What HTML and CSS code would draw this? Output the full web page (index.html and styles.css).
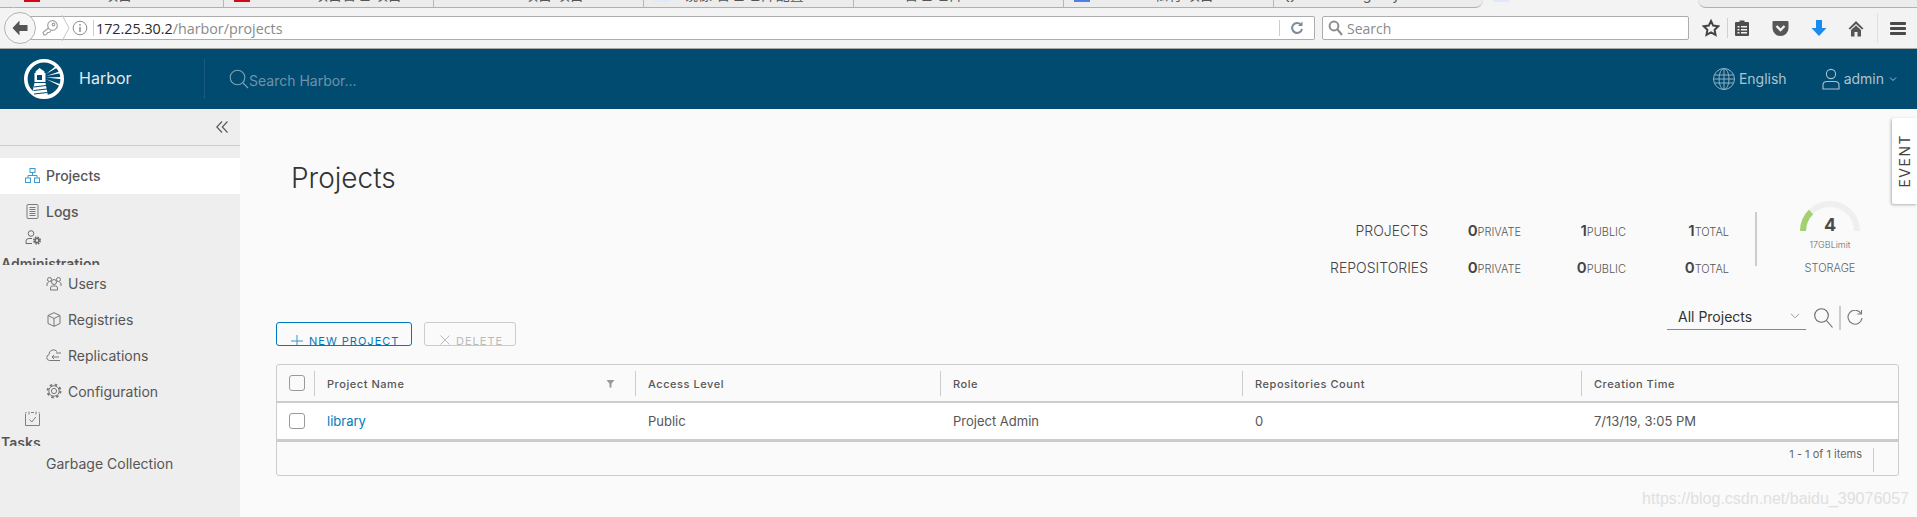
FILE: index.html
```html
<!DOCTYPE html>
<html lang="en">
<head>
<meta charset="utf-8">
<title>Harbor</title>
<link rel="stylesheet" href="styles.css">
</head>
<body>
<div class="tabstrip">
  <div class="tab tab-first"></div>
  <div class="tab"><i class="fav red"></i><span>Harbor 项目</span></div>
  <div class="tab"><i class="fav red"></i><span>Harbor 项目管理 项目</span></div>
  <div class="tab"><i class="fav dim"></i><span>Harbor 项目 项目</span></div>
  <div class="tab"><i class="fav pale"></i><span>镜像 管理 仓库配置</span></div>
  <div class="tab"><span class="pad">管理 仓库</span></div>
  <div class="tab"><i class="fav blue"></i><span>Harbor 私有 项目</span></div>
  <div class="tab tab-last"><span>{} docker registry</span></div>
  <div class="tab tab-active"><i class="fav pale"></i></div>
  <div class="tab tab-rest"></div>
</div>

<div class="toolbar">
  <div class="back">
    <svg width="20" height="20" viewBox="0 0 20 20"><path d="M9.500 2.500 2.500 10l7 7.500V13h8V7h-8z" fill="#555"/></svg>
  </div>
  <div class="urlbar">
    <svg class="key" width="18" height="18" viewBox="0 0 18 18" fill="none" stroke="#a4a4a4" stroke-width="1.200"><circle cx="11.500" cy="6.500" r="4.800"/><circle cx="12.500" cy="5.500" r="1.300"/><path d="M7.500 9 2 13.500 3 16l2.500-.5 1-2h2l1.500-2"/></svg>
    <svg class="crumb" width="9" height="26" viewBox="0 0 9 26" fill="none" stroke="#c4c4c4"><path d="M1 0l7 13-7 13"/></svg>
    <svg class="info" width="16" height="16" viewBox="0 0 16 16" fill="none" stroke="#8a8a8a"><circle cx="8" cy="8" r="6.800"/><path d="M8 7v5M8 4v1.600" stroke-width="1.500"/></svg>
    <i class="url-sep"></i>
    <span class="url"><span class="url-host">172.25.30.2</span>/harbor/projects</span>
    <i class="url-sep url-sep-end"></i>
    <svg class="reload" width="14" height="14" viewBox="0 0 14 14" fill="none" stroke="#7d8b99" stroke-width="2"><path d="M11 3.800A5 5 0 1 0 12 8"/><path d="M12.500 .5v4.500H8z" fill="#7d8b99" stroke="none"/></svg>
  </div>
  <div class="searchbar">
    <svg width="15" height="16" viewBox="0 0 15 16" fill="none" stroke="#8d8d8d" stroke-width="2"><circle cx="6" cy="6" r="4.400"/><path d="M9.500 9.500 14 15"/></svg>
    <span>Search</span>
  </div>
  <div class="tb-icons">
    <svg class="tb-star" width="18" height="18" viewBox="0 0 18 18" fill="none" stroke="#444" stroke-width="2"><path d="M9 2l2.200 4.600 5 .7-3.600 3.500.9 5L9 13.400 4.500 15.800l.9-5L1.800 7.300l5-.7z"/></svg>
    <i class="tb-sep"></i>
    <svg class="tb-slot-clip" width="16" height="18" viewBox="0 0 16 18"><path d="M2 3h3.500V1.500h5V3H14q1 0 1 1v12q0 1-1 1H2q-1 0-1-1V4q0-1 1-1z" fill="#4d4d4d"/><path d="M3.500 7h2v1.500h-2zM7 7h6v1.500H7zM3.500 10h2v1.500h-2zM7 10h6v1.500H7zM3.500 13h2v1.500h-2zM7 13h6v1.500H7z" fill="#f3f3f3"/></svg>
    <svg class="tb-slot-pocket" width="17" height="17" viewBox="0 0 17 17"><path d="M1.500 1h14q1 0 1 1v6a8 8 0 0 1-16 0V2q0-1 1-1z" fill="#565656"/><path d="M4.500 6 8.500 10 12.500 6" fill="none" stroke="#f3f3f3" stroke-width="2.400"/></svg>
    <svg class="tb-slot" width="16" height="18" viewBox="0 0 16 18"><path d="M5 1h6v8h4.500L8 17 .5 9H5z" fill="#1a8cf0"/></svg>
    <svg class="tb-slot tb-home" width="16" height="17" viewBox="0 0 16 17"><path d="M8 1 .5 8.500 2 9.500 8 4l6 5.500 1.500-1z" fill="#555"/><path d="M3 10 8 5.500l5 4.500v6.500H9.500V12h-3v4.500H3z" fill="#555"/></svg>
    <i class="tb-sep tb-sep-tall"></i>
    <svg class="tb-burger" width="16" height="13" viewBox="0 0 16 13" fill="#4a4a4a"><rect width="16" height="3" rx="1"/><rect y="5" width="16" height="3" rx="1"/><rect y="10" width="16" height="3" rx="1"/></svg>
  </div>
</div>

<header class="navbar">
  <svg class="logo" width="40" height="40" viewBox="0 0 40 40">
    <circle cx="20" cy="20" r="18.200" fill="none" stroke="#fff" stroke-width="3.600"/>
    <path d="M15.500 9 20.500 12.500V14H21.500V23H10.500V14H11.500V12.500z" fill="#fff"/>
    <path d="M13 16h5v5h-5z" fill="#014a70"/>
    <path d="M10.500 24H21.500L24 37l-5 1.500-6-1-5-2.500z" fill="#fff"/>
    <path d="M10 28l12-1.500M9.500 31.500l13.500-1.500M10 35l13.500-1.500" stroke="#014a70" stroke-width="1"/>
    <path d="M22 15 32 7l1.500 1.500zM22 17 37 12l.5 2zM22 18.500 38 18v2.200zM22 20 37 25.500l-.7 1.800z" fill="#fff"/>
  </svg>
  <span class="brand">Harbor</span>
  <i class="nav-sep"></i>
  <svg class="nav-search-icon" width="20" height="20" viewBox="0 0 20 20" fill="none" stroke="#7fa2b5" stroke-width="1.100"><circle cx="8.500" cy="8.500" r="7.300"/><path d="M14 14l5 5"/></svg>
  <span class="nav-search">Search Harbor...</span>
  <div class="nav-right">
    <svg class="globe" width="24" height="24" viewBox="0 0 24 24" fill="none" stroke="#8fb0c2"><circle cx="12" cy="12" r="10.500"/><ellipse cx="12" cy="12" rx="5" ry="10.500"/><path d="M12 1.500v21M2.500 8h19M2.500 16h19M1.500 12h21"/></svg>
    <span class="lang">English</span>
    <svg class="user" width="18" height="22" viewBox="0 0 18 22" fill="none" stroke="#a9c2d0" stroke-width="1.100"><circle cx="9" cy="6" r="4.600"/><path d="M1 21v-4q0-3.500 4-3.500h8q4 0 4 3.500v4z"/></svg>
    <span class="lang">admin</span>
    <svg class="caret" width="8" height="6" viewBox="0 0 8 6" fill="none" stroke="#a9c2d0"><path d="M1 1.500 4 4.500 7 1.500"/></svg>
  </div>
</header>

<div class="main">
  <nav class="sidebar">
    <div class="collapse">
      <svg width="12" height="12" viewBox="0 0 12 12" fill="none" stroke="#555" stroke-width="1.100"><path d="M6 .5.800 6 6 11.500M11.500.5 6.300 6l5.200 5.500"/></svg>
    </div>
    <a class="nav-item nav-active">
      <svg width="15" height="15" viewBox="0 0 15 15" fill="none" stroke="#3b9bd2"><rect x="5" y=".5" width="5" height="4"/><rect x=".5" y="10" width="5" height="4.500"/><rect x="9.500" y="10" width="5" height="4.500"/><path d="M7.500 4.500v3M3 10V7.500h9V10"/></svg>
      <span>Projects</span>
    </a>
    <a class="nav-item">
      <svg width="15" height="15" viewBox="0 0 15 15" fill="none" stroke="#7a7a7a"><rect x="2" y=".5" width="11" height="14" rx="1"/><path d="M4.500 3.500h6M4.500 5.500h6M4.500 7.500h6M4.500 9.500h6M4.500 11.500h6"/></svg>
      <span>Logs</span>
    </a>
    <div class="nav-group">
      <svg width="16" height="15" viewBox="0 0 16 15" fill="none" stroke="#6b6b6b"><circle cx="6" cy="3.500" r="2.800"/><path d="M1 13.500V11q0-2.500 3-2.500h3"/><path d="M1 13.500h6"/><circle cx="12" cy="10.500" r="2" stroke-width="1.600"/><circle cx="12" cy="10.500" r="3.200" stroke-width="1.600" stroke-dasharray="1.600 .9"/></svg>
      <span>Administration</span>
    </div>
    <a class="nav-item nav-sub">
      <svg width="16" height="15" viewBox="0 0 16 15" fill="none" stroke="#777"><circle cx="8" cy="6" r="2.500"/><path d="M4.500 14v-2q0-2 2-2h3q2 0 2 2v2z"/><circle cx="3.500" cy="3.500" r="2"/><circle cx="12.500" cy="3.500" r="2"/><path d="M1 10V8q0-1.500 1.500-1.500M15 10V8q0-1.500-1.500-1.500"/></svg>
      <span>Users</span>
    </a>
    <a class="nav-item nav-sub">
      <svg width="16" height="15" viewBox="0 0 16 15" fill="none" stroke="#777"><path d="M8 .7 14 3.500v8L8 14.300 2 11.500v-8z"/><path d="M2 3.500 8 6.500l6-3M8 6.500v7.800"/></svg>
      <span>Registries</span>
    </a>
    <a class="nav-item nav-sub">
      <svg width="16" height="15" viewBox="0 0 16 15" fill="none" stroke="#777"><path d="M11 12.500H3.500a3 3 0 0 1-.5-5.900A4.500 4.500 0 0 1 11 3.500"/><path d="M6 9h7M8 7 6 9l2 2M10 5h5M10 12.500h4"/></svg>
      <span>Replications</span>
    </a>
    <a class="nav-item nav-sub">
      <svg width="16" height="16" viewBox="0 0 16 16" fill="none" stroke="#777"><circle cx="8" cy="8" r="2.600"/><circle cx="8" cy="8" r="5.200"/><circle cx="8" cy="8" r="6.500" stroke-width="1.800" stroke-dasharray="2.500 2.600"/></svg>
      <span>Configuration</span>
    </a>
    <div class="nav-group nav-group-tasks">
      <svg width="15" height="15" viewBox="0 0 15 15" fill="none" stroke="#808080"><path d="M.5 2.500v12h14v-12M4 .5v3M11 .5v3M6 1.500h3M.5 1.500h1M13.500 1.500h1"/><path d="M4.500 8.500l2.300 2.500 4-5"/></svg>
      <span>Tasks</span>
    </div>
    <a class="nav-item nav-plain"><span>Garbage Collection</span></a>
  </nav>

  <main class="content">
    <h1 class="title">Projects</h1>

    <section class="summary">
      <div class="stats">
        <span class="stat-label">PROJECTS</span>
        <span class="stat"><b>0</b>PRIVATE</span>
        <span class="stat"><b>1</b>PUBLIC</span>
        <span class="stat"><b>1</b>TOTAL</span>
        <span class="stat-label">REPOSITORIES</span>
        <span class="stat"><b>0</b>PRIVATE</span>
        <span class="stat"><b>0</b>PUBLIC</span>
        <span class="stat"><b>0</b>TOTAL</span>
      </div>
      <i class="summary-sep"></i>
      <div class="gauge">
        <svg width="60" height="30" viewBox="0 0 60 30" fill="none" stroke-width="6"><path d="M3 30a27 27 0 0 1 54 0" stroke="#efefef"/><path d="M3 30a27 27 0 0 1 8-19" stroke="#a2d16f"/></svg>
        <span class="gauge-num">4</span>
        <span class="gauge-limit">17GBLimit</span>
        <span class="gauge-title">STORAGE</span>
      </div>
    </section>

    <section class="actions">
      <div class="buttons">
        <button class="btn btn-primary"><svg width="12" height="12" viewBox="0 0 12 12" stroke="#3a96cc" fill="none"><path d="M6 0v12M0 6h12"/></svg>NEW PROJECT</button>
        <button class="btn btn-disabled"><svg width="10" height="10" viewBox="0 0 10 10" stroke="#bbb" fill="none"><path d="M.5.500l9 9M9.500.500l-9 9"/></svg>DELETE</button>
      </div>
      <div class="filters">
        <div class="select"><span>All Projects</span><svg width="10" height="6" viewBox="0 0 10 6" fill="none" stroke="#999"><path d="M1 .8 5 4.800 9 .8"/></svg></div>
        <svg class="f-search" width="19" height="20" viewBox="0 0 19 20" fill="none" stroke="#666" stroke-width="1.100"><circle cx="7.500" cy="7.500" r="6.800"/><path d="M12.500 12.500l6 7"/></svg>
        <i class="f-sep"></i>
        <svg class="f-refresh" width="16" height="16" viewBox="0 0 16 16" fill="none" stroke="#777" stroke-width="1.100"><path d="M14 3.500A7 7 0 1 0 15 8"/><path d="M14.500 0v4h-4"/></svg>
      </div>
    </section>

    <section class="table">
      <div class="tr tr-head">
        <div class="check-cell"><i class="check"></i></div>
        <div class="cell th th-filter">Project Name<svg width="9" height="9" viewBox="0 0 9 9" fill="#999"><path d="M.5 1h8L5.500 4.800V8.500h-2V4.800z"/></svg></div>
        <div class="cell th">Access Level</div>
        <div class="cell th">Role</div>
        <div class="cell th">Repositories Count</div>
        <div class="cell th">Creation Time</div>
      </div>
      <div class="tr tr-body">
        <div class="check-cell"><i class="check"></i></div>
        <div class="cell"><a class="link">library</a></div>
        <div class="cell">Public</div>
        <div class="cell">Project Admin</div>
        <div class="cell">0</div>
        <div class="cell">7/13/19, 3:05 PM</div>
      </div>
      <div class="tfoot"><span>1 - 1 of 1 items</span><i class="tfoot-sep"></i></div>
    </section>

    <aside class="event"><span>EVENT</span></aside>
    <div class="watermark">https://blog.csdn.net/baidu_39076057</div>
  </main>
</div>
</body>
</html>
```

FILE: styles.css
```css
* { box-sizing: border-box; }
html, body { margin: 0; padding: 0; height: 100%; overflow: hidden; }
body {
  display: flex; flex-direction: column;
  font-family: Inter, "Noto Sans CJK SC", sans-serif;
  color: #565656; background: #fafafa;
}
i { display: block; font-style: normal; }
a { text-decoration: none; }
svg { display: block; flex: none; }

/* tab strip */
.tabstrip { display: flex; height: 8px; background: #f3f3f3; flex: none; }
.tab {
  width: 210px; height: 8px; flex: none; background: #ececec; overflow: hidden;
  border-bottom: 1px solid #b0b0b0; border-right: 1px solid #b8b8b8;
  display: flex; align-items: flex-start; padding-left: 10px; gap: 14px;
}
.tab span { font-size: 14px; line-height: 16px; height: 16px; margin-top: -13px; color: #555; white-space: nowrap; }
.tab-first { width: 14px; padding: 0; border-right: 1px solid #ececec; }
.tab .pad { padding-left: 40px; }
.fav { width: 16px; height: 2px; flex: none; }
.red { background: #cf0a16; }
.dim { background: #ececec; }
.pale { background: #dfe9fb; }
.blue { background: #4f7fe8; }
.tab-last { width: 209px; border-right: 0; border-bottom-right-radius: 8px; }
.tab-active { width: 215px; background: #f3f3f3; border: 0; }
.tab-rest { flex: 1; border-right: 0; border-bottom-left-radius: 8px; }

/* browser toolbar */
.toolbar {
  height: 41px; flex: none; display: flex; align-items: center;
  background: #f3f3f3; border-bottom: 1px solid #a9a9a9; padding-left: 4px;
  font-family: "Open Sans", sans-serif;
}
.back {
  width: 32px; height: 32px; border-radius: 50%; background: #f6f6f6; border: 1px solid #b4b4b4;
  display: flex; align-items: center; justify-content: center; position: relative; z-index: 1; flex: none;
}
.urlbar {
  width: 1289px; height: 24px; margin-left: -10px; background: #fff; flex: none;
  border: 1px solid #adadad; border-left: 0; border-radius: 0 2px 2px 0;
  display: flex; align-items: center;
}
.key { margin-left: 15px; }
.crumb { margin-left: 2px; }
.info { margin-left: 2px; }
.url-sep { width: 1px; height: 16px; background: #ccc; margin-left: 5px; }
.url { font-size: 14.300px; color: #8a8a8a; margin-left: 2px; flex: 1; }
.url-host { color: #2b2b2b; }
.url-sep-end { margin: 0; }
.reload { margin: 0 10px 0 10px; }
.searchbar {
  width: 367px; height: 24px; margin-left: 7px; background: #fff; flex: none;
  border: 1px solid #adadad; border-radius: 2px; display: flex; align-items: center; gap: 4px; padding-left: 5px;
  font-size: 14px; color: #8a8a8a;
}
.tb-icons { display: flex; align-items: center; flex: 1; }
.tb-star { margin-left: 13px; }
.tb-sep { width: 1px; height: 20px; background: #d0d0d0; margin-left: 7px; }
.tb-slot-clip { margin-left: 6px; }
.tb-slot-pocket { margin-left: 22px; }
.tb-slot { margin-left: 22px; }
.tb-home { margin-left: 21px; }
.tb-sep-tall { height: 30px; margin-left: 13px; background: #e0e0e0; }
.tb-burger { margin-left: 12px; }

/* navbar */
.navbar {
  height: 60px; flex: none; background: #014a70; display: flex; align-items: center;
  padding-left: 24px; font-size: 14px;
}
.brand { font-size: 16px; color: #e4ebf0; margin-left: 15px; width: 125px; padding-bottom: 2px; }
.nav-sep { width: 1px; height: 40px; background: #195b7e; }
.nav-search-icon { margin-left: 24px; }
.nav-search { color: #6d93a8; margin-left: 0; font-size: 14px; padding-top: 2px; }
.nav-right { margin-left: auto; display: flex; align-items: center; padding-right: 20px; }
.lang { color: #adc4d1; font-size: 14px; padding-bottom: 1px; }
.globe { margin-right: 3px; }
.user { margin-left: 35px; margin-right: 4px; }
.caret { margin-left: 5px; }

/* main split */
.main { flex: 1; display: flex; min-height: 0; }
.sidebar { width: 240px; flex: none; background: #eee; font-size: 14px; }
.collapse { height: 37px; border-bottom: 1px solid #ccc; margin-bottom: 12px; display: flex; justify-content: flex-end; align-items: center; padding-right: 12px; padding-bottom: 1px; }
.nav-item { height: 36px; display: flex; align-items: center; color: #565656; font-weight: 500; padding-left: 25px; padding-bottom: 2px; gap: 6px; }
.nav-active { background: #fff; }
.nav-group { height: 35px; margin-bottom: 1px; overflow: hidden; font-weight: 600; }
.nav-group svg { margin: 0 0 0 25px; }
.nav-group span { display: block; margin-top: 10px; padding-left: 1px; line-height: 18px; }
.nav-group-tasks { height: 36px; margin-bottom: 0; }
.nav-group-tasks svg { margin-top: 1px; }
.nav-group-tasks span { margin-top: 8px; }
.nav-item.nav-sub { padding-left: 46px; gap: 6px; font-weight: 400; }
.nav-item.nav-plain { padding-left: 46px; font-weight: 400; }

/* content */
.content { flex: 1; min-width: 0; padding: 51px 18px 0 36px; position: relative; }
.title { margin: 0 0 0 15px; font-size: 28px; line-height: 36px; font-weight: 300; color: #333; }
.summary { display: flex; justify-content: flex-end; align-items: flex-start; padding-right: 34px; height: 110px; }
.stats {
  display: grid; grid-template-columns: auto 93px 105px 103px; grid-auto-rows: 37px;
  margin-top: 16px; align-items: center;
}
.stat-label { font-size: 14px; font-weight: 300; text-align: right; color: #444; }
.stat { font-size: 11px; font-weight: 300; text-align: right; color: #555; }
.stat b { font-size: 15px; color: #444; font-weight: 600; }
.summary-sep { width: 2px; height: 54px; background: #ccc; margin: 16px 38px 0 26px; }
.gauge { width: 70px; margin-top: 5px; display: flex; flex-direction: column; align-items: center; position: relative; }
.gauge-num { position: absolute; top: 14px; left: 0; right: 0; text-align: center; font-size: 18px; line-height: 20px; font-weight: 700; color: #4a4a4a; }
.gauge-limit { font-size: 9px; line-height: 12px; margin-top: 8px; color: #666; white-space: nowrap; font-weight: 300; }
.gauge-title { font-size: 11px; line-height: 14px; margin-top: 10px; color: #666; font-weight: 300; }

.actions { display: flex; justify-content: space-between; align-items: flex-start; height: 58px; }
.buttons { display: flex; gap: 12px; padding-top: 16px; }
.btn {
  height: 24px; border-radius: 3px; background: transparent; display: flex; align-items: flex-start;
  font: 400 11px/12px Inter, sans-serif; letter-spacing: 1px; padding: 12px 0 0 14px; gap: 6px; overflow: hidden;
}
.btn-primary { width: 136px; border: 1px solid #0079b8; color: #0079b8; }
.btn-disabled { width: 92px; border: 1px solid #ccc; color: #bbb; padding-left: 15px; }
.filters { display: flex; align-items: center; margin-right: 36px; height: 24px; }
.select { width: 139px; height: 24px; border-bottom: 1px solid #888; display: flex; align-items: center; justify-content: space-between; padding: 0 6px 3px 11px; font-size: 14px; color: #333; }
.f-search { margin-left: 8px; }
.f-sep { width: 2px; height: 24px; background: #ccc; margin-left: 6px; }
.f-refresh { margin-left: 6px; }

.table { border: 1px solid #ccc; border-radius: 3px; height: 112px; font-size: 13px; }
.tr { display: grid; grid-template-columns: 37px 321px 305px 302px 339px 1fr; }
.tr-head { height: 38px; border-bottom: 2px solid #ccc; font-size: 11px; font-weight: 500; letter-spacing: .55px; }
.tr-body { height: 39px; background: #fff; border-bottom: 3px solid #ccc; }
.check-cell { display: flex; align-items: center; padding-left: 12px; }
.tr-head .check-cell { padding-bottom: 1px; }
.check { width: 16px; height: 16px; border: 1px solid #9a9a9a; border-radius: 3px; background: #fff; }
.tr-head .check { background: #fafafa; }
.cell { padding-left: 12px; border-left: 1px solid transparent; display: flex; align-items: center; }
.th { margin: 6px 0 5px; border-left-color: #ccc; }
.th-filter { justify-content: space-between; padding-right: 20px; }
.link { color: #007cbb; }
.tfoot { height: 33px; display: flex; justify-content: flex-end; align-items: flex-start; padding: 6px 24px 0 0; font-size: 11px; color: #666; }
.tfoot span { line-height: 12px; }
.tfoot-sep { width: 1px; height: 24px; background: #ccc; margin-left: 11px; }

.event {
  position: absolute; top: 9px; right: 0; width: 25px; height: 86px; background: #fff;
  box-shadow: -1px 1px 3px rgba(0,0,0,.3); border-radius: 2px 0 0 2px; display: flex; align-items: center; justify-content: center;
}
.event span { writing-mode: vertical-rl; transform: rotate(180deg); font-size: 14px; letter-spacing: 1.500px; color: #444; }
.watermark { position: absolute; right: 8px; bottom: 9px; font: 16px/18px "Liberation Sans", sans-serif; color: #e0e0e0; }
```
